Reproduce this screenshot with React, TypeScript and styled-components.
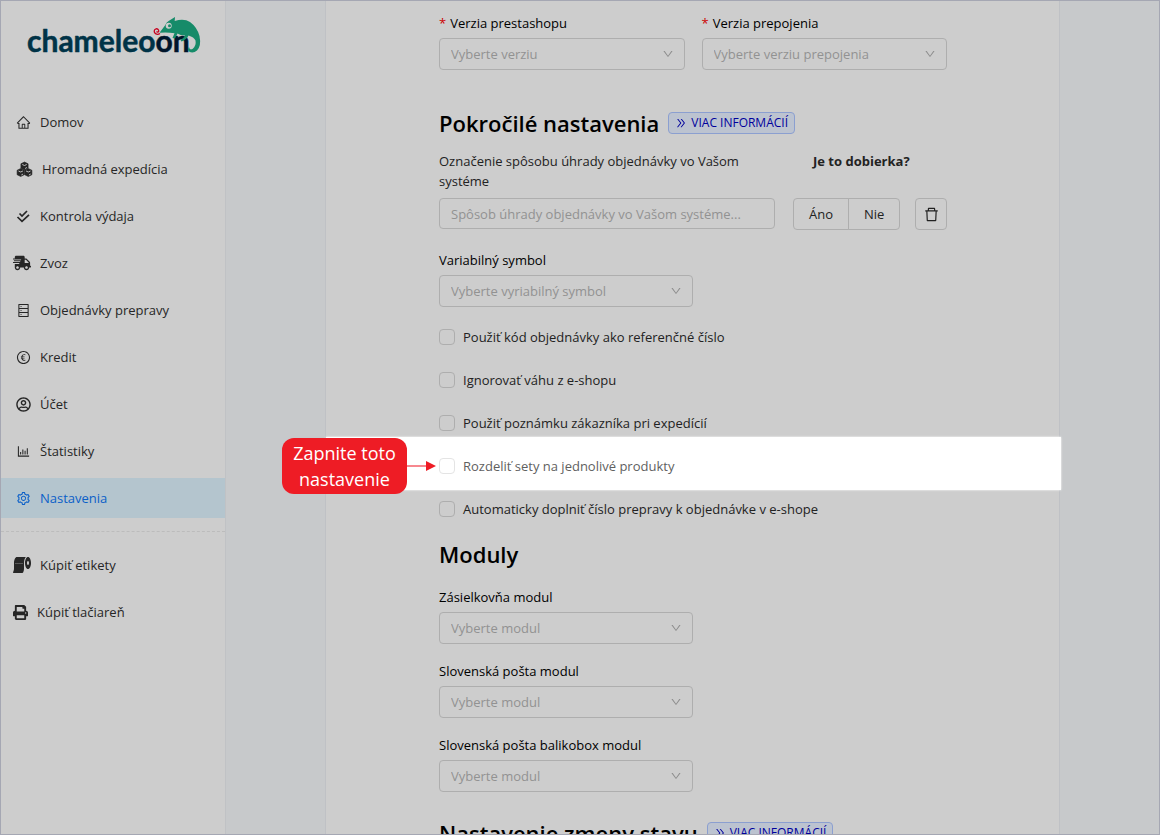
import React from "react";
import styled, { createGlobalStyle, css } from "styled-components";
import {
  AiOutlineHome,
  AiOutlineDatabase,
  AiOutlineEuroCircle,
  AiOutlineBarChart,
  AiOutlineSetting,
  AiOutlineDown,
  AiOutlineDoubleRight,
  AiOutlineDelete,
} from "react-icons/ai";
import {
  FaShippingFast,
  FaRegUserCircle,
  FaToiletPaper,
  FaPrint,
} from "react-icons/fa";

const GlobalStyle = createGlobalStyle`
  *, *::before, *::after { box-sizing: border-box; }
  body {
    margin: 0;
    background: #c7c9cb;
    color: #222;
    font: 13px/20px "Open Sans", "Noto Sans", sans-serif;
  }
  button, input, select { font: inherit; color: inherit; margin: 0; }
`;

const Shell = styled.div`
  display: flex;
  height: 100vh;
  overflow: hidden;
  border: 1px solid #a5a7b3;
`;

const Sidebar = styled.aside`
  flex: 0 0 225px;
  background: #cdcdcd;
  border-right: 1px solid #c0c2c5;
`;

const LogoLink = styled.a`
  display: block;
  padding: 13px 0 0 24px;
  height: 101px;
`;

const Menu = styled.nav`
  display: flex;
  flex-direction: column;
  gap: 7px;
`;

const MenuItem = styled.a<{ $active?: boolean; $wide?: boolean }>`
  display: flex;
  align-items: center;
  gap: 9px;
  height: 40px;
  padding-left: ${(p) => (p.$wide ? 12 : 15)}px;
  color: ${(p) => (p.$active ? "#0a5fc8" : "#262626")};
  background: ${(p) => (p.$active ? "#b4c5ce" : "transparent")};
  text-decoration: none;
  svg {
    flex: none;
  }
`;

const Divider = styled.hr`
  width: 100%;
  margin: 6px 0;
  border: 0;
  border-top: 1px dashed #bcbcbc;
`;

const Main = styled.main`
  flex: 1;
  min-width: 0;
  padding: 0 99px;
`;

const Card = styled.form`
  min-height: 100%;
  padding: 12px 112px 0 113px;
  background: #cdcdcd;
  border: solid #bfc1c5;
  border-width: 0 1px;
`;

const TwoColumns = styled.div`
  display: grid;
  grid-template-columns: 1fr 1fr;
  gap: 17px;
`;

const Field = styled.div<{ $half?: boolean }>`
  display: flex;
  flex-direction: column;
  gap: 5px;
  width: ${(p) => (p.$half ? "50%" : "auto")};
`;

const FieldLabel = styled.label`
  color: #000;
`;

const Required = styled.span`
  margin-right: 4px;
  color: #cc0000;
`;

const SelectBox = styled.div`
  display: grid;
  align-items: center;
  > * {
    grid-area: 1 / 1;
  }
  svg {
    justify-self: end;
    margin-right: 11px;
    color: #8c8c8c;
    pointer-events: none;
  }
`;

const outline = css`
  border: 1px solid #aeaeae;
  border-radius: 4px;
  background: transparent;
`;

const NativeSelect = styled.select`
  ${outline}
  appearance: none;
  width: 100%;
  height: 32px;
  padding: 0 32px 0 11px;
  color: #929292;
`;

const SectionTitle = styled.div<{ $top: number }>`
  display: flex;
  align-items: center;
  gap: 9px;
  margin-top: ${(p) => p.$top}px;
`;

const Heading = styled.h2`
  margin: 0;
  color: #000;
  font-size: 22px;
  font-weight: 600;
  line-height: 32px;
  white-space: nowrap;
`;

const InfoButton = styled.button`
  display: flex;
  align-items: center;
  gap: 4px;
  height: 22px;
  padding: 0 6px;
  border: 1px solid #8b9fd0;
  border-radius: 4px;
  background: #bcc3d0;
  color: #00009c;
  font-size: 12px;
  white-space: nowrap;
`;

const PaymentGrid = styled.div`
  display: grid;
  grid-template-columns: 1fr 154px;
  gap: 7px 18px;
  margin: 12px 0 20px;
`;

const TextInput = styled.input`
  ${outline}
  width: 100%;
  height: 31px;
  padding: 0 11px;
  &::placeholder {
    color: #929292;
    opacity: 1;
  }
`;

const Question = styled.strong`
  padding-left: 20px;
`;

const Actions = styled.div`
  display: flex;
  justify-content: space-between;
`;

const ChoiceGroup = styled.div`
  display: flex;
`;

const Choice = styled.button`
  ${outline}
  height: 32px;
  padding: 0 15px;
  &:first-child {
    border-radius: 4px 0 0 4px;
  }
  &:last-child {
    margin-left: -1px;
    border-radius: 0 4px 4px 0;
  }
`;

const IconButton = styled.button`
  ${outline}
  display: grid;
  place-items: center;
  width: 32px;
  height: 32px;
  padding: 0;
`;

const Options = styled.div`
  margin-top: 8px;
`;

const OptionLabel = styled.label`
  display: flex;
  align-items: center;
  gap: 8px;
  height: 43px;
`;

const Checkbox = styled.input`
  appearance: none;
  width: 16px;
  height: 16px;
  border: 1px solid #aeaeae;
  border-radius: 4px;
`;

const Spotlight = styled.div`
  position: relative;
  z-index: 1;
  margin: 0 -114px 0 -113px;
  padding: 0 114px 0 113px;
  color: #5f5f5f;
  &::before {
    content: "";
    position: absolute;
    inset: -7px 0 -3px;
    background: #fff;
    box-shadow: 0 0 2px #fff;
  }
  ${OptionLabel} {
    position: relative;
  }
  ${Checkbox} {
    border-color: #e4e4e4;
  }
`;

const Callout = styled.div`
  position: absolute;
  top: -6px;
  right: 100%;
  display: flex;
  align-items: center;
  margin-right: -110px;
`;

const Bubble = styled.div`
  width: 125px;
  padding: 2px 8px;
  border-radius: 12px;
  background: #ee1c25;
  color: #fff;
  font-size: 18px;
  line-height: 26px;
  text-align: center;
`;

const ModuleFields = styled.div`
  display: flex;
  flex-direction: column;
  gap: 17px;
  margin-top: 17px;
`;

function Logo() {
  return (
    <LogoLink href="#domov" aria-label="chameleoon">
      <svg width="180" height="44" viewBox="24 13 180 44">
        <text
          x="26"
          y="51"
          fill="#003347"
          stroke="#003347"
          strokeWidth="0.500"
          strokeLinejoin="round"
          fontFamily="Lato, sans-serif"
          fontSize="30"
          fontWeight="700"
        >
          chameleo
          <tspan fill="#00152b" stroke="#00152b">on</tspan>
        </text>
        <path
          d="M158.500 31.700L164 24.500Q165.500 21 168 19.800L174 16L173.700 20Q183 17 189 21Q196 26 198.500 35Q200.500 45 196 49.500Q192 53 188 50.500Q186 48.500 188 46Q188.500 49.500 191.500 48Q195.500 45 194.500 39.500Q193 36 187.500 34.500Q185.500 38.500 180.500 40.500L179.500 39Q183 37 184 34.500Q179 34.500 176.500 32.500L174 37.500L171.500 37L173.500 32.300Q167 31 158.500 31.700Z"
          fill="#168b69"
        />
        <circle cx="167.700" cy="24.700" r="3" fill="#cdcdcd" />
        <circle cx="168.500" cy="24.700" r="1.500" fill="#168b69" />
        <path
          d="M159 32.500C156 34.500 153 32.500 153.200 30S156.500 27 157.500 29S156.500 31.600 155.500 30.500"
          fill="none"
          stroke="#c8001e"
          strokeWidth="1.300"
        />
      </svg>
    </LogoLink>
  );
}

function CubesIcon() {
  const cube = "M0-4L3.600-2.200V2.200L0 4L-3.600 2.200V-2.200Z";
  return (
    <svg width="17" height="16" viewBox="0 0 17 16">
      {["8.500 5", "4.700 11.500", "12.300 11.500"].map((at) => (
        <g key={at} transform={`translate(${at})`}>
          <path d={cube} fill="#262626" stroke="#262626" strokeLinejoin="round" strokeWidth="0.600" />
          <path d="M-2.200-1.500L0-.5L2.200-1.500M.6 2.500L2.400 1.500" fill="none" stroke="#cdcdcd" strokeWidth="0.900" />
        </g>
      ))}
    </svg>
  );
}

function DoubleCheckIcon() {
  return (
    <svg width="15" height="16" viewBox="0 0 15 16" fill="none" stroke="#262626" strokeWidth="1.700">
      <path d="M3.500 5.500L6 8L11 3" />
      <path d="M1.500 9L6 13.300L13 6.800" />
    </svg>
  );
}

function SelectField(props: {
  id: string;
  label: string;
  placeholder: string;
  required?: boolean;
  half?: boolean;
}) {
  return (
    <Field $half={props.half}>
      <FieldLabel htmlFor={props.id}>
        {props.required && <Required>*</Required>}
        {props.label}
      </FieldLabel>
      <SelectBox>
        <NativeSelect id={props.id}>
          <option>{props.placeholder}</option>
        </NativeSelect>
        <AiOutlineDown size={12} />
      </SelectBox>
    </Field>
  );
}

function Option({ children }: { children: string }) {
  return (
    <OptionLabel>
      <Checkbox type="checkbox" />
      {children}
    </OptionLabel>
  );
}

function MoreInfo() {
  return (
    <InfoButton type="button">
      <AiOutlineDoubleRight size={12} />
      VIAC INFORMÁCIÍ
    </InfoButton>
  );
}

export default function App() {
  return (
    <>
      <GlobalStyle />
      <Shell>
        <Sidebar>
          <Logo />
          <Menu>
            <MenuItem href="#domov"><AiOutlineHome size={15} />Domov</MenuItem>
            <MenuItem href="#expedicia"><CubesIcon />Hromadná expedícia</MenuItem>
            <MenuItem href="#kontrola"><DoubleCheckIcon />Kontrola výdaja</MenuItem>
            <MenuItem href="#zvoz" $wide><FaShippingFast size={18} />Zvoz</MenuItem>
            <MenuItem href="#objednavky"><AiOutlineDatabase size={15} />Objednávky prepravy</MenuItem>
            <MenuItem href="#kredit"><AiOutlineEuroCircle size={15} />Kredit</MenuItem>
            <MenuItem href="#ucet"><FaRegUserCircle size={15} />Účet</MenuItem>
            <MenuItem href="#statistiky"><AiOutlineBarChart size={15} />Štatistiky</MenuItem>
            <MenuItem href="#nastavenia" $active><AiOutlineSetting size={15} />Nastavenia</MenuItem>
            <Divider />
            <MenuItem href="#etikety" $wide><FaToiletPaper size={18} />Kúpiť etikety</MenuItem>
            <MenuItem href="#tlaciaren" $wide><FaPrint size={15} />Kúpiť tlačiareň</MenuItem>
          </Menu>
        </Sidebar>
        <Main>
          <Card>
            <TwoColumns>
              <SelectField id="shop" label="Verzia prestashopu" placeholder="Vyberte verziu" required />
              <SelectField id="link" label="Verzia prepojenia" placeholder="Vyberte verziu prepojenia" required />
            </TwoColumns>

            <SectionTitle $top={37}>
              <Heading>Pokročilé nastavenia</Heading>
              <MoreInfo />
            </SectionTitle>
            <PaymentGrid>
              <label htmlFor="payment">Označenie spôsobu úhrady objednávky vo Vašom systéme</label>
              <Question>Je to dobierka?</Question>
              <TextInput id="payment" placeholder="Spôsob úhrady objednávky vo Vašom systéme..." />
              <Actions>
                <ChoiceGroup>
                  <Choice type="button">Áno</Choice>
                  <Choice type="button">Nie</Choice>
                </ChoiceGroup>
                <IconButton type="button" aria-label="Odstrániť">
                  <AiOutlineDelete size={17} />
                </IconButton>
              </Actions>
            </PaymentGrid>
            <SelectField id="symbol" label="Variabilný symbol" placeholder="Vyberte vyriabilný symbol" half />

            <Options>
              <Option>Použiť kód objednávky ako referenčné číslo</Option>
              <Option>Ignorovať váhu z e-shopu</Option>
              <Option>Použiť poznámku zákazníka pri expedícií</Option>
              <Spotlight>
                <Option>Rozdeliť sety na jednolivé produkty</Option>
                <Callout>
                  <Bubble>Zapnite toto nastavenie</Bubble>
                  <svg width="29" height="12" viewBox="0 0 29 12">
                    <path d="M0 6h20" stroke="#f4606a" strokeWidth="1.500" />
                    <path d="M19 1l10 5-10 5z" fill="#ee1c25" />
                  </svg>
                </Callout>
              </Spotlight>
              <Option>Automaticky doplniť číslo prepravy k objednávke v e-shope</Option>
            </Options>

            <SectionTitle $top={8}>
              <Heading>Moduly</Heading>
            </SectionTitle>
            <ModuleFields>
              <SelectField id="zasielkovna" label="Zásielkovňa modul" placeholder="Vyberte modul" half />
              <SelectField id="posta" label="Slovenská pošta modul" placeholder="Vyberte modul" half />
              <SelectField id="balikobox" label="Slovenská pošta balikobox modul" placeholder="Vyberte modul" half />
            </ModuleFields>

            <SectionTitle $top={25}>
              <Heading>Nastavenie zmeny stavu</Heading>
              <MoreInfo />
            </SectionTitle>
          </Card>
        </Main>
      </Shell>
    </>
  );
}
